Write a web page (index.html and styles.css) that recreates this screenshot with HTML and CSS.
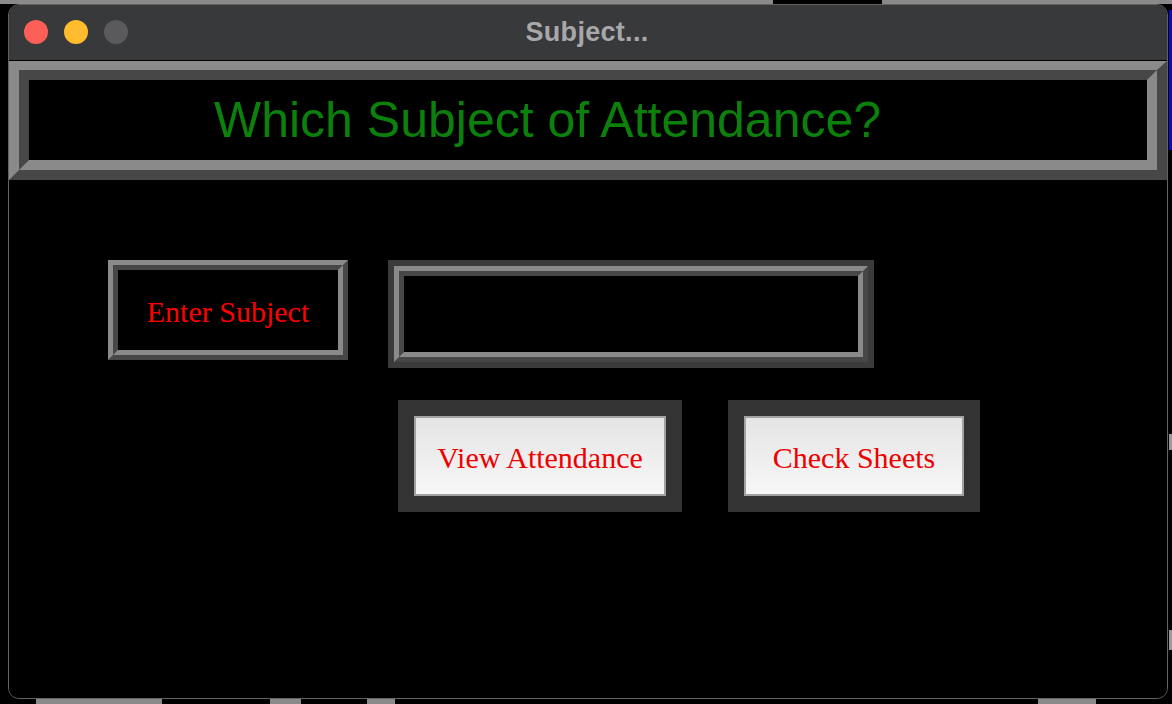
FILE: index.html
```html
<!DOCTYPE html>
<html>
<head>
<meta charset="utf-8">
<title>Subject...</title>
<link rel="stylesheet" href="styles.css">
</head>
<body>
<div class="desktop">
  <div class="top-strip"></div>
  <div class="middle">
    <div class="left-gap"></div>
    <div class="window">
      <div class="titlebar">
        <div class="lights">
          <span class="light red"></span>
          <span class="light yellow"></span>
          <span class="light gray"></span>
        </div>
        <div class="title">Subject...</div>
        <div></div>
      </div>
      <div class="content">
        <div class="header">
          <div class="header-inner">Which Subject of Attendance?</div>
        </div>
        <div class="form">
          <div class="row">
            <div class="label-box">
              <div class="label-inner">Enter Subject</div>
            </div>
            <div class="entry-ring">
              <div class="entry-outer">
                <div class="entry-inner"></div>
              </div>
            </div>
          </div>
          <div class="row buttons">
            <div class="btn-frame"><div class="btn btn-view">View Attendance</div></div>
            <div class="btn-frame"><div class="btn btn-check">Check Sheets</div></div>
          </div>
        </div>
      </div>
    </div>
    <div class="right-strip">
      <div class="blue"></div>
      <div class="mark mark-a"></div>
      <div class="mark mark-b"></div>
    </div>
  </div>
  <div class="bottom-strip"></div>
</div>
</body>
</html>
```

FILE: styles.css
```css
* { box-sizing: border-box; }
html, body { margin: 0; padding: 0; background: #000; }
.desktop {
  width: 1172px;
  height: 704px;
  background: #000;
  display: flex;
  flex-direction: column;
  overflow: hidden;
}
.top-strip {
  height: 4px;
  flex: none;
  background: linear-gradient(to right, #8a8a8a 0 773px, #000 773px 882px, #8a8a8a 882px);
}
.middle {
  display: flex;
  height: 695px;
  flex: none;
}
.left-gap { width: 8px; flex: none; background: #000; }
.window {
  width: 1160px;
  height: 695px;
  flex: none;
  border: 1px solid #626264;
  border-radius: 11px;
  overflow: hidden;
  background: #000;
  display: flex;
  flex-direction: column;
}
.titlebar {
  height: 56px;
  flex: none;
  background: #38393b;
  border-bottom: 1px solid #000;
  display: grid;
  grid-template-columns: 1fr auto 1fr;
  align-items: center;
}
.lights {
  display: flex;
  gap: 16px;
  padding-left: 15px;
  padding-bottom: 1px;
}
.light {
  width: 24px;
  height: 24px;
  border-radius: 50%;
  display: block;
}
.light.red { background: #fe5f57; }
.light.yellow { background: #febc2e; }
.light.gray { background: #5a5a5c; }
.title {
  font-family: "Liberation Sans", Arial, sans-serif;
  font-weight: bold;
  font-size: 27px;
  color: #a8a8aa;
  letter-spacing: 0.3px;
  padding-bottom: 1px;
  padding-right: 2px;
}
.content { flex: 1; background: #000; }
.header {
  border-style: solid;
  border-width: 9px 10px 10px 10px;
  border-color: #8a8a8a #474747 #474747 #8a8a8a;
}
.header-inner {
  height: 100px;
  border: 10px solid;
  border-color: #474747 #8a8a8a #8a8a8a #474747;
  display: flex;
  align-items: center;
  padding-left: 185px;
  font-family: "Liberation Sans", Arial, sans-serif;
  font-size: 50px;
  color: #0b800b;
}
.form {
  padding: 80px 0 0 99px;
  display: flex;
  flex-direction: column;
  gap: 32px;
}
.row {
  display: flex;
  align-items: flex-start;
  gap: 40px;
}
.label-box {
  width: 240px;
  height: 100px;
  border: 5px solid;
  border-color: #8a8a8a #474747 #474747 #8a8a8a;
}
.label-inner {
  height: 100%;
  border: 5px solid;
  border-color: #474747 #8a8a8a #8a8a8a #474747;
  display: flex;
  align-items: center;
  justify-content: center;
  font-family: "Liberation Serif", "Times New Roman", serif;
  font-size: 30px;
  color: #ff0000;
  padding-top: 4px;
}
.entry-ring {
  width: 486px;
  height: 108px;
  border: 6px solid #3b3b3b;
}
.entry-outer {
  height: 100%;
  border: 5px solid;
  border-color: #8a8a8a #474747 #474747 #8a8a8a;
}
.entry-inner {
  height: 100%;
  border: 5px solid;
  border-color: #474747 #8a8a8a #8a8a8a #474747;
  background: #000;
}
.buttons {
  padding-left: 290px;
  gap: 46px;
}
.btn-frame {
  border: 16px solid #333333;
}
.btn {
  height: 80px;
  border: 2px solid #a2a2a2;
  background: linear-gradient(to bottom, #e4e4e4, #f7f7f7);
  display: flex;
  align-items: center;
  justify-content: center;
  font-family: "Liberation Serif", "Times New Roman", serif;
  font-size: 30px;
  color: #ee0000;
  padding-top: 4px;
}
.btn-view { width: 252px; }
.btn-check { width: 220px; }
.right-strip {
  width: 4px;
  flex: none;
  margin-left: 1px;
  display: flex;
  flex-direction: column;
}
.blue { height: 140px; margin-top: 6px; background: #0c0cc8; }
.mark { width: 4px; background: #9a9a9a; }
.mark-a { height: 16px; margin-top: 284px; }
.mark-b { height: 20px; margin-top: 180px; }
.bottom-strip {
  height: 5px;
  flex: none;
  background: linear-gradient(to right,
    #000 0 36px, #8a8a8a 36px 162px, #000 162px 270px, #8a8a8a 270px 301px,
    #000 301px 367px, #8a8a8a 367px 395px, #000 395px 1038px, #8a8a8a 1038px 1096px, #000 1096px);
}
```
